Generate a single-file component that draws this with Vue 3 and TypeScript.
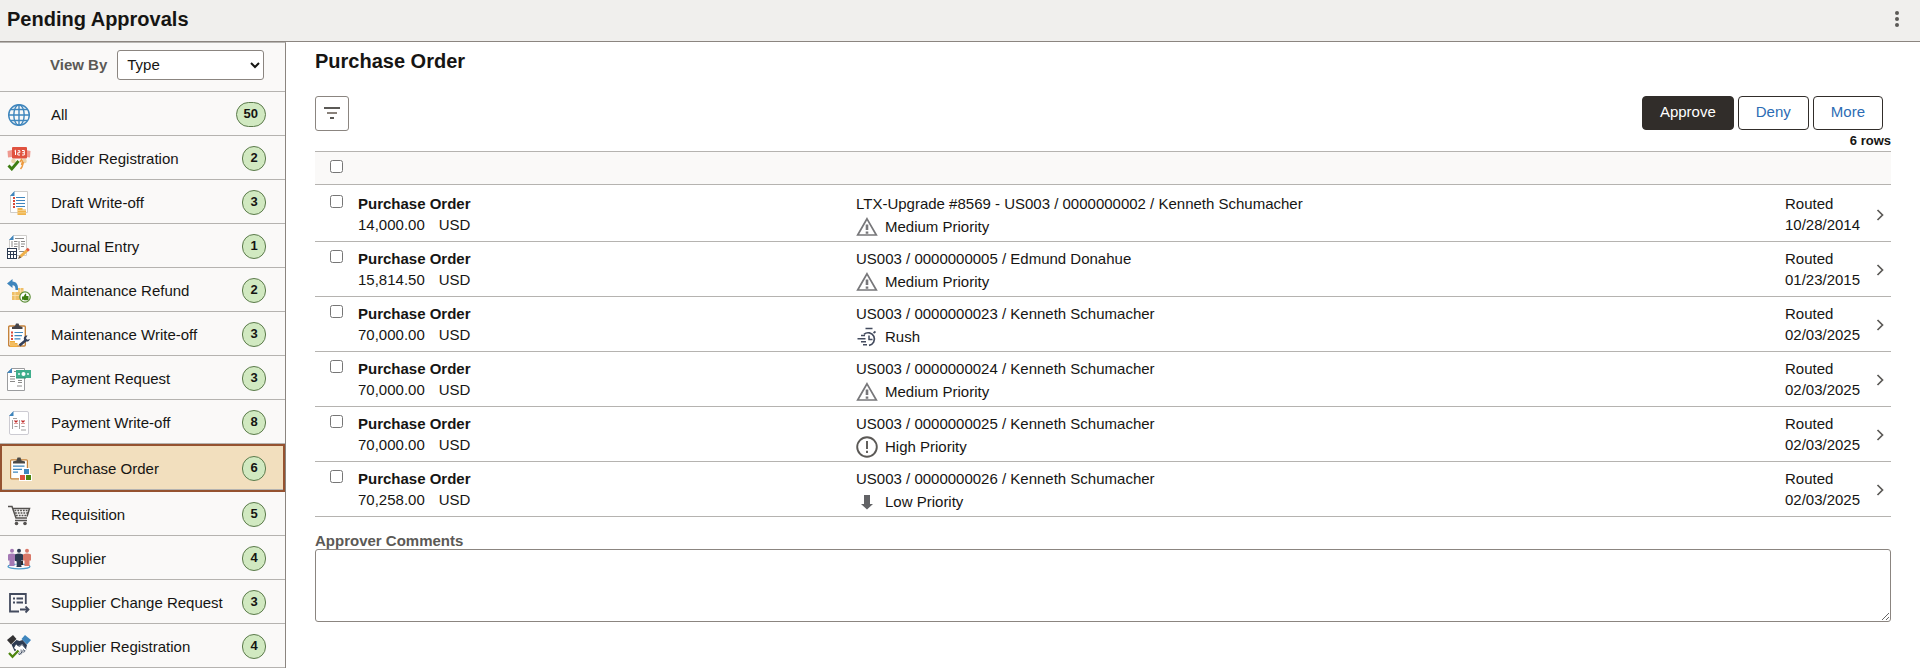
<script setup lang="ts">
import { ref } from 'vue'

interface Category {
  id: string
  label: string
  count: number
}

interface Approval {
  id: number
  amount: string
  summary: string
  priority: 'medium' | 'rush' | 'high' | 'low'
  routed: string
}

const categories: Category[] = [
  { id: 'all', label: 'All', count: 50 },
  { id: 'bidder', label: 'Bidder Registration', count: 2 },
  { id: 'draft', label: 'Draft Write-off', count: 3 },
  { id: 'journal', label: 'Journal Entry', count: 1 },
  { id: 'refund', label: 'Maintenance Refund', count: 2 },
  { id: 'maintenance', label: 'Maintenance Write-off', count: 3 },
  { id: 'request', label: 'Payment Request', count: 3 },
  { id: 'payment', label: 'Payment Write-off', count: 8 },
  { id: 'order', label: 'Purchase Order', count: 6 },
  { id: 'requisition', label: 'Requisition', count: 5 },
  { id: 'supplier', label: 'Supplier', count: 4 },
  { id: 'change', label: 'Supplier Change Request', count: 3 },
  { id: 'registration', label: 'Supplier Registration', count: 4 },
]

const priorityLabels: Record<Approval['priority'], string> = {
  medium: 'Medium Priority',
  rush: 'Rush',
  high: 'High Priority',
  low: 'Low Priority',
}

const approvals: Approval[] = [
  { id: 1, amount: '14,000.00', summary: 'LTX-Upgrade #8569 - US003 / 0000000002 / Kenneth Schumacher', priority: 'medium', routed: '10/28/2014' },
  { id: 2, amount: '15,814.50', summary: 'US003 / 0000000005 / Edmund Donahue', priority: 'medium', routed: '01/23/2015' },
  { id: 3, amount: '70,000.00', summary: 'US003 / 0000000023 / Kenneth Schumacher', priority: 'rush', routed: '02/03/2025' },
  { id: 4, amount: '70,000.00', summary: 'US003 / 0000000024 / Kenneth Schumacher', priority: 'medium', routed: '02/03/2025' },
  { id: 5, amount: '70,000.00', summary: 'US003 / 0000000025 / Kenneth Schumacher', priority: 'high', routed: '02/03/2025' },
  { id: 6, amount: '70,258.00', summary: 'US003 / 0000000026 / Kenneth Schumacher', priority: 'low', routed: '02/03/2025' },
]

const active = ref('order')
const checked = ref<number[]>([])
const comments = ref('')

function toggleAll(event: Event) {
  const on = (event.target as HTMLInputElement).checked
  checked.value = on ? approvals.map((a) => a.id) : []
}
</script>

<template>
  <div class="page">
    <header class="topbar">
      <h1>Pending Approvals</h1>
      <button class="kebab" type="button" aria-label="Actions">
        <svg width="6" height="18" viewBox="0 0 6 18" fill="#5b5956">
          <circle cx="3" cy="3" r="2" /><circle cx="3" cy="9" r="2" /><circle cx="3" cy="15" r="2" />
        </svg>
      </button>
    </header>

    <div class="body">
      <nav class="sidebar">
        <div class="viewby">
          <label for="viewby">View By</label>
          <select id="viewby">
            <option>Type</option>
          </select>
        </div>
        <ul>
          <li v-for="c in categories" :key="c.id" :class="{ selected: c.id === active }">
            <a :href="'#' + c.id" class="item" @click.prevent="active = c.id">
              <svg class="icon" width="24" height="24" viewBox="0 0 24 24" fill="none" aria-hidden="true">
                <g v-if="c.id === 'all'" stroke="#3f86bd" stroke-width="1.4">
                  <circle cx="12" cy="12" r="10.3" /><ellipse cx="12" cy="12" rx="5.2" ry="10.3" />
                  <path d="M12 1.5v21M1.5 12h21M3.5 6.5h17M3.5 17.5h17" />
                </g>
                <g v-else-if="c.id === 'bidder'">
                  <path d="M.5 4l4.500-1v7l-4 .5zM23.500 4L19 3v7l4 .5z" fill="#ef9a90" />
                  <circle cx="6.500" cy="14" r="2.300" fill="#ead2a8" /><circle cx="17.500" cy="14" r="2.300" fill="#ead2a8" />
                  <rect x="5" y="0" width="15" height="11.500" rx="1" fill="#e0523f" />
                  <path d="M7.500 4l1-.8V8M10.800 3.700h2v2h-2V8h2.200M15 3.500h2.300V8H15m.4-2.300h1.900" stroke="#fff" stroke-width="1" />
                  <path d="M13 15l1.500-2.500 1 2-1 3.500M16.500 15l-1.500 5-1.500 2" stroke="#ee9a3e" stroke-width="1.500" />
                  <path d="M1.500 18.500l3.300 3.500 6.700-8" stroke="#3d7d12" stroke-width="2.800" />
                </g>
                <g v-else-if="c.id === 'draft'">
                  <path d="M7.500 .5h13v21H3.500v-17z" fill="#fff" stroke="#cfcdca" />
                  <path d="M7.500 0v5H3z" fill="#3f86bd" />
                  <path d="M6 6h2v2H6zM6 9h2v2H6zM6 12h2v2H6zM6 15h2v2H6z" fill="#d94a38" />
                  <path d="M9 6.500h9M9 9.500h9M9 12.500h9M9 15.500h9" stroke="#3f86bd" />
                  <path d="M10.500 17h5v1.500h3.500V24h-8.500z" fill="#f0b44c" />
                  <path d="M10.500 19.500h8.500M10.500 21.800h8.500" stroke="#f7dda8" stroke-width=".7" />
                </g>
                <g v-else-if="c.id === 'journal'">
                  <path d="M6.500 .5h13v20H2.500v-16z" fill="#fff" stroke="#cfcdca" />
                  <path d="M6.500 0v5H2z" fill="#3f86bd" />
                  <path d="M8 3.500h9M5 6v6M7 6.500h3.500M7 9h3.500M7 11.500h3.500M12 6v9M14 6.500h4M14 9h4M14 11.500h3M12 16.500h5" stroke="#8b8a89" />
                  <rect x="0" y="13" width="10" height="11" fill="#2d3b52" />
                  <path d="M1 14h8v2H1zM1 17h2v2H1zM4 17h2v2H4zM7 17h2v2H7zM1 20h2v3H1zM4 20h2v3H4zM7 20h2v3H7z" fill="#fff" />
                  <path d="M13.500 21.500l7-6.500" stroke="#efb04a" stroke-width="3" />
                  <path d="M20 15.500l1.800-1.700" stroke="#e0523f" stroke-width="3" /><path d="M11 24l1.500-3.500 2 2z" fill="#74573a" />
                </g>
                <g v-else-if="c.id === 'refund'">
                  <path d="M0 4.500L5.500 0v2.500c4 0 6 3.500 5.500 8.500H8.500c0-3.500-1-4.800-3-4.800V9z" fill="#3f86bd" />
                  <path d="M5 13h6V9h5.500v12H5z" fill="#efbf68" />
                  <path d="M8 13v8M5 16.500h7M13.500 9v5M11 12h5" stroke="#fae3b4" stroke-width=".8" />
                  <circle cx="18" cy="18" r="5.200" fill="#fff" stroke="#5c8f38" stroke-width="1.200" />
                  <path d="M15 17.500h1.600l1.700-3 .9.600v2h2.300v3.600l-.8.600h-3.300l-.8-.6H15z" fill="#3d7d12" />
                </g>
                <g v-else-if="c.id === 'maintenance'">
                  <rect x="1.700" y="3" width="16.600" height="20" rx="1" fill="#fff" stroke="#c5833b" stroke-width="1.400" />
                  <path d="M5 6V4l3-1 1-2.500h2.500L12.500 3l3 1v2z" fill="#45444a" />
                  <path d="M4 8.500h2v2H4zM4 11.700h2v2H4zM4 14.900h2v2H4z" fill="#d94a38" />
                  <path d="M7.500 9.500H16M7.500 12.700H15M7.500 15.900h6" stroke="#3f86bd" stroke-width="1.200" />
                  <path d="M3 18h5v2h2.500v4H3z" fill="#f0ac3c" /><path d="M3 20h5M3 22h7.500" stroke="#fadfa9" stroke-width=".7" />
                  <path d="M12.500 22.500l6-5" stroke="#34405a" stroke-width="2.600" />
                  <path d="M20.500 12.500c-3-.4-4.400 2.300-3.300 4.500 1.300 2.400 5 2 5.800-1l-2.500.7-1.600-1.400z" fill="#34405a" />
                </g>
                <g v-else-if="c.id === 'request'">
                  <path d="M5 1.500h12.500v22H.5v-18z" fill="#fff" stroke="#9b9c9e" />
                  <path d="M5 1v5H0z" fill="#3f86bd" />
                  <path d="M7 4.500h2M3 9.500h5M3 12h5M3 14.500h5M11 13.500h4M11 15.500h4M10 19h5" stroke="#8b8a89" />
                  <rect x="9" y="3" width="15" height="8" fill="#3fae8c" />
                  <path d="M9 11h10" stroke="#2c9274" /><circle cx="16.500" cy="7" r="2" fill="#fff" />
                  <circle cx="12" cy="7" r=".9" fill="#fff" /><circle cx="21" cy="7" r=".9" fill="#fff" />
                </g>
                <g v-else-if="c.id === 'payment'">
                  <path d="M6.500 .5H20q1.500 0 1.500 1.500v20q0 1.500-1.500 1.500H4q-1.500 0-1.500-1.500V4.500z" fill="#fff" stroke="#cccbd2" />
                  <path d="M6.500 0v5H2z" fill="#3f86bd" />
                  <path d="M6 7.500h4M14 19h5M5.500 9v9M12.500 9v9M7.500 15.500h3M14.500 15.500h3" stroke="#a3a2a1" />
                  <path d="M7.500 9.500l3 3m0-3l-3 3M14.500 9.500l3 3m0-3l-3 3" stroke="#bf2a28" stroke-width="1.300" />
                </g>
                <g v-else-if="c.id === 'order'">
                  <rect x="1.600" y="2.800" width="16.800" height="19" rx="1" fill="#fff" stroke="#c5833b" stroke-width="1.200" />
                  <path d="M4 6.500v-2l3.500-1L8.500.5h3l1 3 3.500 1v2z" fill="#4a4946" />
                  <path d="M4 9.200h11.500M4 12.300h9M4 15.200h5" stroke="#3f86bd" stroke-width="1.200" />
                  <path d="M14 11h7v6h2v7H10v-7h4z" fill="#fff" />
                  <path d="M15 12h5v5h-5z" fill="#3f86bd" /><path d="M11 18h5v5h-5z" fill="#e0523f" /><path d="M17 18h5v5h-5z" fill="#4f8610" />
                </g>
                <g v-else-if="c.id === 'requisition'">
                  <path d="M1 3.500h4l4 11.500h11M8 17.500h12M6 5.500h16.500l-2.500 8" stroke="#54524f" stroke-width="1.500" />
                  <path d="M7.500 7.500h14M8 10h13M9 12.500h11" stroke="#54524f" stroke-width="1.500" stroke-dasharray="1.800 1" />
                  <circle cx="9.500" cy="20.500" r="1.800" fill="#54524f" /><circle cx="18" cy="20.500" r="1.800" fill="#54524f" />
                </g>
                <g v-else-if="c.id === 'supplier'">
                  <ellipse cx="12" cy="19.500" rx="11" ry="2.400" stroke="#4d9bcb" stroke-width="1.200" />
                  <circle cx="5" cy="3.800" r="2" fill="#a479b5" /><path d="M1 7.500q4-2 8 0v6H7.500V19h-5v-5.500H1z" fill="#a479b5" />
                  <circle cx="20" cy="3.800" r="2" fill="#d97868" /><path d="M16 7.500q4-2 8 0v6h-1.500V19h-5v-5.500H16z" fill="#d97868" />
                  <circle cx="12" cy="3.800" r="2" fill="#2d3b52" /><path d="M8 7.500q4-2 8 0V14h-1.500v6h-5v-6H8z" fill="#2d3b52" />
                  <path d="M9 15v4M15 13v6" stroke="#fff" stroke-width=".8" /><path d="M14 14h2v4h-2z" fill="#2d2c30" />
                </g>
                <g v-else-if="c.id === 'change'" stroke="#434b5e" stroke-width="1.800">
                  <path d="M18.800 13V3H3v17.500h9" />
                  <path d="M6 7.500h2M9.500 7.500h6.500M6 11.500h2M9.500 11.500h6.500" />
                  <path d="M13 18.500h8M18.500 15.500l3 3-3 3" />
                </g>
                <g v-else>
                  <path d="M0 5l6-5 3.500 4-5.500 5.500z" fill="#343334" /><path d="M24 5l-6-5-3.500 4L20 9.500z" fill="#3f86bd" />
                  <path d="M4.500 9.500l5-4.500 3 1 3-1 4.500 5-1.500 6-6 4-5-4z" fill="#2d3b52" />
                  <path d="M9 9.500l3 1.500 3-2 4.500 5.500-1.200 1.500-2.800-2.500 1.800 3.500-1.500 1-2.500-3 1.300 4-1.600.5-3-4L7 13z" fill="#fff" />
                  <path d="M10 10l2.500 1.500 2.500-2 4.300 4.800M14 14.500l2.800 3M12 16.500l2 2.800" stroke="#2d3b52" stroke-width=".8" />
                  <path d="M2 18l3.500 3.800 6-6.300" stroke="#fff" stroke-width="4" /><path d="M2 18l3.500 3.800 6-6.300" stroke="#4f8610" stroke-width="2.400" />
                </g>
              </svg>
              <span class="label">{{ c.label }}</span>
              <span class="badge">{{ c.count }}</span>
            </a>
          </li>
        </ul>
      </nav>

      <main>
        <h2>Purchase Order</h2>
        <div class="toolbar">
          <button class="filter" type="button" aria-label="Filter">
            <svg width="16" height="13" viewBox="0 0 16 13">
              <path d="M0 1h16" stroke="#5b5956" stroke-width="2" />
              <path d="M3 6h10" stroke="#8a827b" stroke-width="2" />
              <path d="M6 11h4" stroke="#5b5956" stroke-width="2" />
            </svg>
          </button>
          <div class="actions">
            <button class="btn primary" type="button">Approve</button>
            <button class="btn" type="button">Deny</button>
            <button class="btn" type="button">More</button>
          </div>
        </div>
        <div class="rowcount">6 rows</div>

        <table>
          <colgroup>
            <col class="c-check" /><col class="c-title" /><col /><col class="c-date" /><col class="c-go" />
          </colgroup>
          <thead>
            <tr>
              <th colspan="5">
                <input type="checkbox" aria-label="Select all rows" :checked="checked.length === approvals.length" @change="toggleAll" />
              </th>
            </tr>
          </thead>
          <tbody>
            <tr v-for="a in approvals" :key="a.id">
              <td class="check"><input v-model="checked" type="checkbox" :value="a.id" :aria-label="'Select ' + a.summary" /></td>
              <td>
                <div class="line strong">Purchase Order</div>
                <div class="line amount"><span>{{ a.amount }}</span><span>USD</span></div>
              </td>
              <td>
                <div class="line">{{ a.summary }}</div>
                <div class="priority">
                  <svg width="22" height="22" viewBox="0 0 22 22" fill="none" aria-hidden="true">
                    <g v-if="a.priority === 'medium'" stroke="#77777a">
                      <path d="M11 2.800L20.300 19H1.700z" stroke-width="1.700" />
                      <path d="M11 8.500v5.500M11 15.500v2.200" stroke-width="2.600" />
                    </g>
                    <g v-else-if="a.priority === 'rush'" stroke="#434b5e" stroke-width="1.700">
                      <path d="M9.500 2.500h7M17.500 7l2-1.500" />
                      <path d="M8 8.300a6.300 6.300 0 1 1 5 11" />
                      <path d="M13 9.500v4h3.500M5 9.500h4M1.500 12.700h8M5 15.700h5M7 18.700h4" stroke-width="1.500" />
                    </g>
                    <g v-else-if="a.priority === 'high'" stroke="#5b5956" stroke-width="1.900">
                      <circle cx="11" cy="11" r="9.800" /><path d="M11 5v8M11 14.800v2.200" />
                    </g>
                    <path v-else d="M8 4h6v9h3l-6 5.500L5 13h3z" fill="#626366" />
                  </svg>
                  <span>{{ priorityLabels[a.priority] }}</span>
                </div>
              </td>
              <td>
                <div class="line">Routed</div>
                <div class="line date">{{ a.routed }}</div>
              </td>
              <td class="go">
                <a href="#details" :aria-label="'Open ' + a.summary" @click.prevent>
                  <svg width="8" height="12" viewBox="0 0 8 12" fill="none"><path d="M1.500 1l5 5-5 5" stroke="#5b5956" stroke-width="1.700" /></svg>
                </a>
              </td>
            </tr>
          </tbody>
        </table>

        <label class="comments-label" for="comments">Approver Comments</label>
        <textarea id="comments" v-model="comments"></textarea>
      </main>
    </div>
  </div>
</template>

<style>
body {
  margin: 0;
  background: #fff;
}
</style>

<style scoped>
.page {
  min-height: 100vh;
  display: flex;
  flex-direction: column;
  font: 15px/20px 'Liberation Sans', Arial, sans-serif;
  color: #161513;
}
.page * {
  box-sizing: border-box;
}
.topbar {
  display: flex;
  align-items: center;
  justify-content: space-between;
  height: 42px;
  padding: 0 20px 4px 7px;
  background: #f0efed;
  border-bottom: 1px solid #8b8580;
}
h1,
h2 {
  margin: 0;
  font-size: 20px;
  line-height: 24px;
  font-weight: bold;
}
.kebab {
  display: flex;
  padding: 0;
  border: 0;
  background: none;
}
.body {
  flex: 1;
  display: flex;
}
.sidebar {
  flex: none;
  width: 286px;
  background: #faf9f8;
  border-top: 1px solid #b9b7b4;
  border-right: 1px solid #8b8580;
}
.viewby {
  display: flex;
  align-items: center;
  gap: 10px;
  height: 49px;
  padding: 0 21px 5px 50px;
  border-bottom: 1px solid #b5b3b0;
}
.viewby label {
  flex: none;
  font-weight: bold;
  color: #5b5956;
}
.viewby select {
  flex: 1;
  min-width: 0;
  height: 30px;
  padding: 0 0 0 5px;
  border: 1px solid #8b8580;
  border-radius: 3px;
  background: #fff;
  color: #161513;
  font: inherit;
}
ul {
  margin: 0;
  padding: 0;
  list-style: none;
}
.item {
  display: flex;
  align-items: center;
  height: 44px;
  padding: 2px 19px 0 7px;
  border-bottom: 1px solid #b5b3b0;
  color: inherit;
  text-decoration: none;
}
.selected {
  border: 2px solid #955230;
  background: #f2dfbe;
}
.selected .item {
  padding-right: 17px;
}
.icon {
  flex: none;
  margin-right: 20px;
}
.label {
  flex: 1;
  white-space: nowrap;
}
.badge {
  min-width: 24px;
  height: 25px;
  padding: 0 7px;
  border: 1px solid #5b7a4b;
  border-radius: 13px;
  background: #d1e9c1;
  font-size: 13px;
  line-height: 22px;
  font-weight: bold;
  text-align: center;
}
main {
  flex: 1;
  min-width: 0;
  padding: 7px 29px 0;
}
.toolbar {
  display: flex;
  justify-content: space-between;
  align-items: flex-start;
  padding: 23px 8px 0 0;
}
.filter {
  display: flex;
  align-items: center;
  justify-content: center;
  width: 34px;
  height: 35px;
  padding: 0;
  border: 1px solid #8b8580;
  border-radius: 3px;
  background: #fff;
}
.actions {
  display: flex;
  gap: 4px;
}
.btn {
  height: 34px;
  padding: 0 17px 2px;
  border: 1px solid #312d2a;
  border-radius: 4px;
  background: #fff;
  color: #2c6cb4;
  font: inherit;
}
.primary {
  background: #312d2a;
  color: #fff;
}
.rowcount {
  font-size: 13px;
  line-height: 20px;
  font-weight: bold;
  text-align: right;
}
table {
  width: 100%;
  table-layout: fixed;
  border-collapse: separate;
  border-spacing: 0;
  border-top: 1px solid #b5b3b0;
}
.c-check {
  width: 43px;
}
.c-title {
  width: 31.6%;
}
.c-date {
  width: 84px;
}
.c-go {
  width: 22px;
}
th,
td {
  padding: 0;
  border-bottom: 1px solid #b5b3b0;
  text-align: left;
  vertical-align: top;
}
th {
  height: 33px;
  padding: 8px 0 0 15px;
  background: #faf9f8;
}
td {
  height: 55px;
  padding-top: 6px;
}
tbody tr:first-child td {
  height: 57px;
  padding-top: 8px;
}
input[type='checkbox'] {
  display: block;
  width: 13px;
  height: 13px;
  margin: 0;
}
.check input {
  margin: 2px 0 0 15px;
}
.line {
  line-height: 21px;
  white-space: nowrap;
}
.strong {
  font-weight: bold;
}
.amount {
  display: flex;
  gap: 14px;
}
.priority {
  display: flex;
  align-items: center;
  gap: 7px;
  height: 26px;
}
td.go {
  vertical-align: middle;
}
.go a {
  display: flex;
  justify-content: flex-end;
  padding: 0 7px 4px 0;
}
.comments-label {
  display: block;
  margin-top: 15px;
  line-height: 17px;
  font-weight: bold;
  color: #5b5956;
}
textarea {
  display: block;
  width: 100%;
  height: 73px;
  border: 1px solid #8b8580;
  border-radius: 3px;
  font: inherit;
  resize: vertical;
}
</style>
